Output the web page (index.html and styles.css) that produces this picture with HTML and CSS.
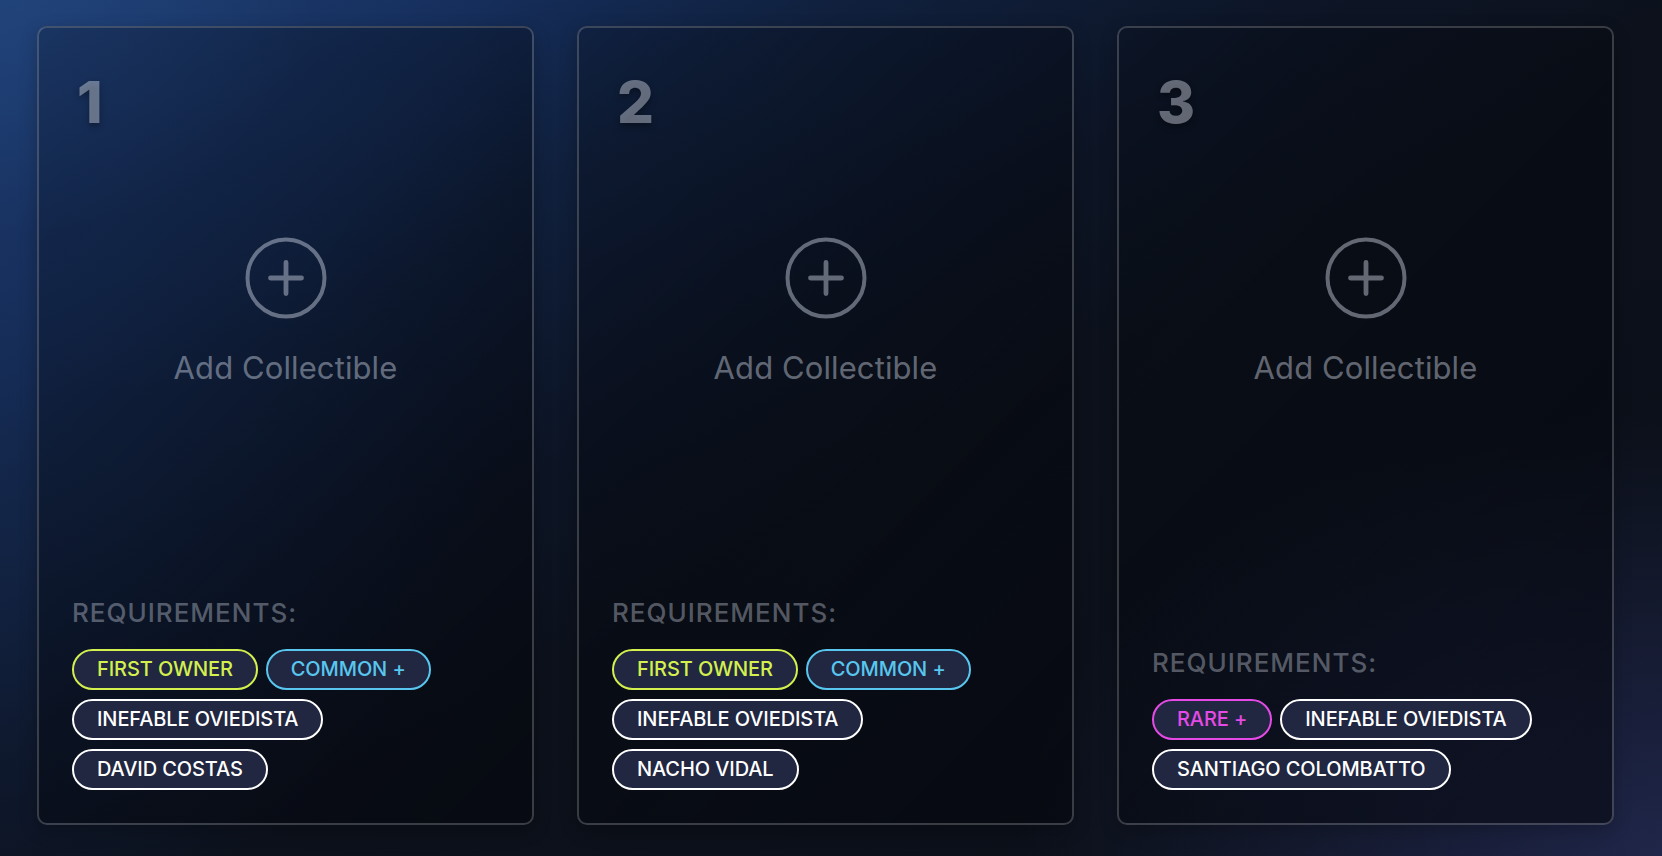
FILE: index.html
```html
<!DOCTYPE html>
<html lang="es">
<head>
<meta charset="utf-8">
<title>Collectibles</title>
<link rel="stylesheet" href="styles.css">
</head>
<body>
<main class="slots">
  <section class="card">
    <div class="num">1</div>
    <div class="add">
      <svg class="add-icon" viewBox="0 0 82 82" aria-hidden="true"><circle cx="41" cy="41" r="38.5" fill="none" stroke="currentColor" stroke-width="4"/><path d="M41 25.5v31M25.5 41h31" stroke="currentColor" stroke-width="4.8" stroke-linecap="round" fill="none"/></svg>
      <div class="add-label">Add Collectible</div>
    </div>
    <div class="reqs">
      <div class="reqs-title">REQUIREMENTS:</div>
      <div class="tags">
        <span class="tag tag-lime">FIRST OWNER</span>
        <span class="tag tag-cyan">COMMON +</span>
        <span class="tag">INEFABLE OVIEDISTA</span>
        <span class="tag">DAVID COSTAS</span>
      </div>
    </div>
  </section>
  <section class="card">
    <div class="num">2</div>
    <div class="add">
      <svg class="add-icon" viewBox="0 0 82 82" aria-hidden="true"><circle cx="41" cy="41" r="38.5" fill="none" stroke="currentColor" stroke-width="4"/><path d="M41 25.5v31M25.5 41h31" stroke="currentColor" stroke-width="4.8" stroke-linecap="round" fill="none"/></svg>
      <div class="add-label">Add Collectible</div>
    </div>
    <div class="reqs">
      <div class="reqs-title">REQUIREMENTS:</div>
      <div class="tags">
        <span class="tag tag-lime">FIRST OWNER</span>
        <span class="tag tag-cyan">COMMON +</span>
        <span class="tag">INEFABLE OVIEDISTA</span>
        <span class="tag">NACHO VIDAL</span>
      </div>
    </div>
  </section>
  <section class="card">
    <div class="num">3</div>
    <div class="add">
      <svg class="add-icon" viewBox="0 0 82 82" aria-hidden="true"><circle cx="41" cy="41" r="38.5" fill="none" stroke="currentColor" stroke-width="4"/><path d="M41 25.5v31M25.5 41h31" stroke="currentColor" stroke-width="4.8" stroke-linecap="round" fill="none"/></svg>
      <div class="add-label">Add Collectible</div>
    </div>
    <div class="reqs">
      <div class="reqs-title">REQUIREMENTS:</div>
      <div class="tags">
        <span class="tag tag-pink">RARE +</span>
        <span class="tag">INEFABLE OVIEDISTA</span>
        <span class="tag">SANTIAGO COLOMBATTO</span>
      </div>
    </div>
  </section>
</main>
</body>
</html>
```

FILE: styles.css
```css
* { box-sizing: border-box; }

html, body {
  margin: 0;
  height: 100%;
}

body {
  font-family: Inter, "Noto Sans", "Liberation Sans", sans-serif;
  background:
    radial-gradient(ellipse 700px 520px at 0% 0%, rgba(34,70,128,0.7) 0%, rgba(26,52,98,0.3) 45%, rgba(20,40,76,0) 80%),
    radial-gradient(ellipse 620px 820px at 0% 30%, rgba(24,48,94,0.55) 0%, rgba(24,48,94,0.2) 50%, rgba(24,48,94,0) 85%),
    radial-gradient(ellipse 760px 520px at 100% 100%, #1f2649 0%, rgba(31,38,73,0) 85%),
    linear-gradient(150deg, #214479 0%, #163060 13%, #10203d 27%, #0d1526 42%, #0c111b 55%, #0b0f18 100%);
  overflow: hidden;
}

.slots {
  display: grid;
  grid-template-columns: repeat(3, 497px);
  column-gap: 43px;
  padding: 26px 48px 31px 37px;
  height: 856px;
}

.card {
  display: flex;
  flex-direction: column;
  border: 2px solid rgba(255,255,255,0.2);
  border-radius: 10px;
  padding: 45px 33px 33px;
  background: linear-gradient(135deg, rgba(4,6,12,0.2) 0%, rgba(4,6,12,0.36) 50%, rgba(4,6,12,0.56) 100%);
  box-shadow: 0 6px 18px rgba(0,0,0,0.22);
}

.num {
  font-size: 58px;
  line-height: 58px;
  font-weight: 800;
  margin-left: 5px;
  color: rgba(225,232,245,0.42);
  text-shadow: 0 3px 6px rgba(0,0,0,0.35);
  letter-spacing: -1px;
}

.add {
  display: flex;
  flex-direction: column;
  align-items: center;
  margin-top: 106px;
  color: rgba(225,232,245,0.42);
}

.add-icon {
  width: 82px;
  height: 82px;
  display: block;
}

.add-label {
  margin-top: 30px;
  font-size: 31px;
  line-height: 37px;
  font-weight: 400;
  letter-spacing: 0.1px;
}

.reqs {
  margin-top: auto;
}

.reqs-title {
  font-size: 26px;
  line-height: 32px;
  font-weight: 500;
  letter-spacing: 1px;
  color: rgba(225,232,245,0.36);
}

.tags {
  margin-top: 20px;
  display: flex;
  flex-wrap: wrap;
  column-gap: 8px;
  row-gap: 9px;
}

.tag {
  display: inline-block;
  height: 41px;
  padding: 0 23px;
  border: 2px solid #ffffff;
  border-radius: 999px;
  background: #212641;
  color: #ffffff;
  font-size: 20px;
  line-height: 37px;
  font-weight: 500;
  letter-spacing: -0.1px;
  white-space: nowrap;
}

.tag-lime { border-color: #d3f04e; color: #d3f04e; }
.tag-cyan { border-color: #58c6ee; color: #58c6ee; }
.tag-pink { border-color: #e54ae6; color: #e54ae6; }
```
